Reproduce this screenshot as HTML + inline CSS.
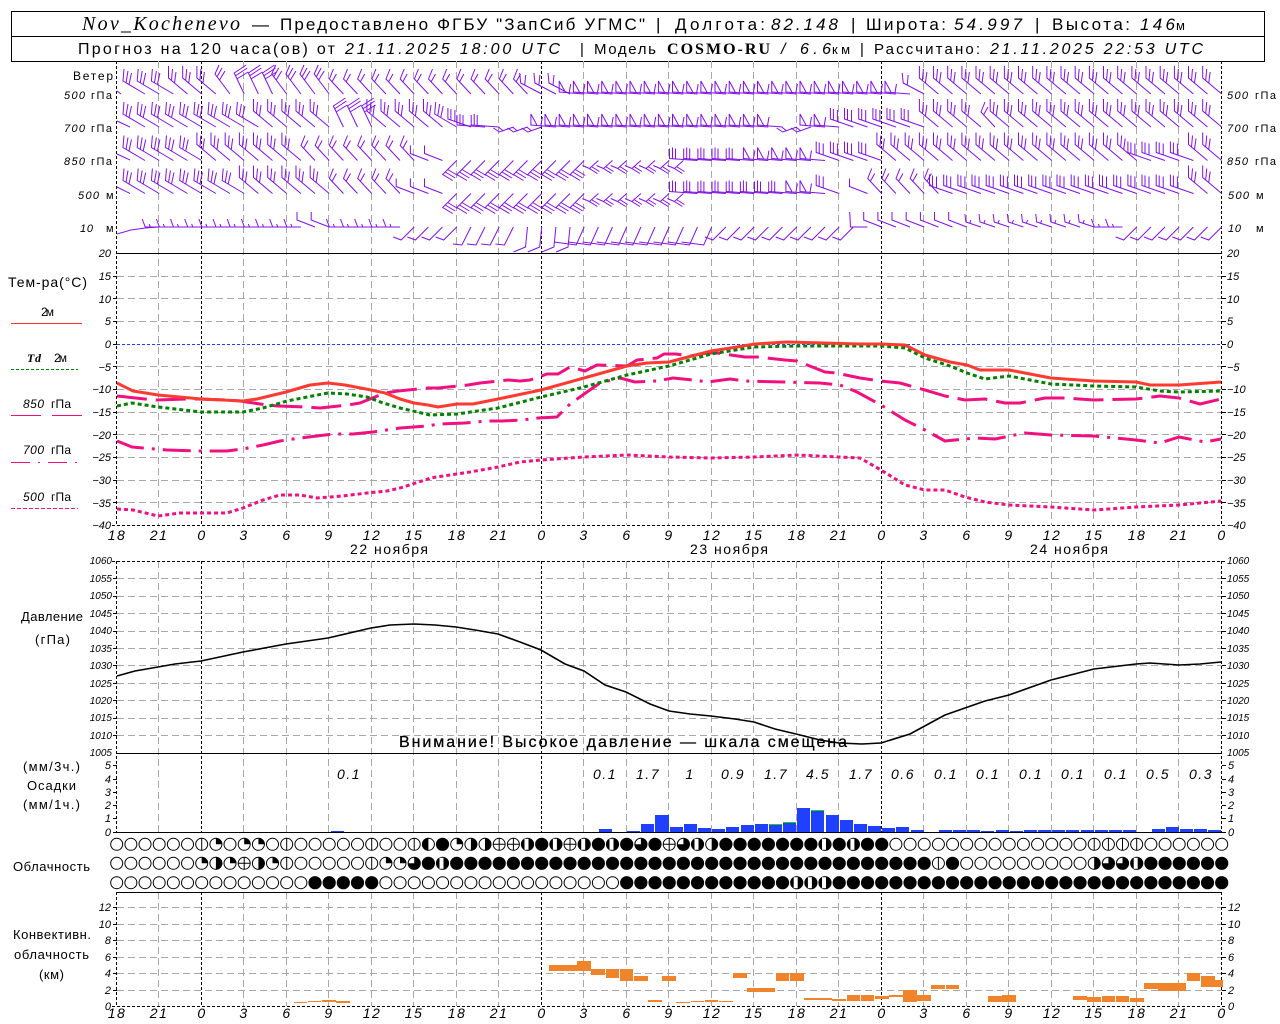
<!DOCTYPE html>
<html><head><meta charset="utf-8"><title>Nov_Kochenevo</title>
<style>
html,body{margin:0;padding:0;background:#fff}
svg{display:block}
text{font-family:"Liberation Sans",sans-serif;fill:#000}
.i{font-style:italic}
.n{font-style:italic;font-size:11px}
.s{font-family:"Liberation Serif",serif;font-style:italic}
.t{font-style:italic;font-size:14px;text-anchor:middle;letter-spacing:1.5px}
.e{text-anchor:end}
</style></head><body>
<svg width="1280" height="1024" viewBox="0 0 1280 1024" xmlns="http://www.w3.org/2000/svg">
<defs>
<g id="e"><circle r="6" fill="#fff" stroke="#000" stroke-width="1"/></g>
<g id="f"><circle r="6.6" fill="#000"/></g>
<g id="v"><circle r="6" fill="#fff" stroke="#000"/><path d="M0-6V6" stroke="#000"/></g>
<g id="q"><circle r="6" fill="#fff" stroke="#000"/><path d="M0 0V-6.4A6.4 6.4 0 0 1 6.4 0Z" fill="#000"/></g>
<g id="R"><circle r="6" fill="#fff" stroke="#000"/><path d="M0-6.4A6.4 6.4 0 0 1 0 6.4Z" fill="#000"/></g>
<g id="L"><circle r="6" fill="#fff" stroke="#000"/><path d="M0-6.4A6.4 6.4 0 0 0 0 6.4Z" fill="#000"/></g>
<g id="B"><circle r="6.6" fill="#000"/><rect x="-3" y="-5.5" width="4" height="11" fill="#fff"/></g>
<g id="C"><circle r="6" fill="#fff" stroke="#000"/><path d="M-6 0H6M0-6V6" stroke="#000"/></g>
<g id="T"><circle r="6.6" fill="#000"/><path d="M0 0V-5.5A5.5 5.5 0 0 0-5.5 0Z" fill="#fff"/></g>
<g id="e3"><use href="#e"/><use href="#e" x="14.17"/><use href="#e" x="28.33"/></g>
<g id="e6"><use href="#e3"/><use href="#e3" x="42.5"/></g>
<g id="f3"><use href="#f"/><use href="#f" x="14.17"/><use href="#f" x="28.33"/></g>
<g id="f6"><use href="#f3"/><use href="#f3" x="42.5"/></g>
<g id="f12"><use href="#f6"/><use href="#f6" x="85"/></g>
<path id="A" d="M0 0L-22-13L-21-25M-19-11L-17-23M-16-9.5L-13.5-21"/>
<path id="Ba" d="M0 0L-19-16L-19-28M-16-13.5L-15-25M-13-11L-11.5-22"/>
<path id="Cc" d="M0 0L-10-21L2-29M-9-18L3-26M-7.5-15L4-22"/>
<path id="D" d="M0 0L-15-20L-11-29M-13-17L-8-26M-10.5-14L-5-23"/>
<path id="E" d="M0 0L-14-15L-10-25M-11.5-12L-7-20"/>
<path id="F" d="M0 0L-21-11L-22-21M-17-9L-16-19"/>
<path id="H" d="M0 0L-25-2L-25-13L-19-2M-15-1.5L-13.5-10"/>
<path id="U" d="M0 0L-28-2L-28-12M-25-2L-25-13M-22-2L-22-12"/>
<path id="P" d="M0 0L-23-8L-23-19M-20-7L-20-18M-16-6L-16-17"/>
<path id="Z" d="M0 0L-14 14L-4 20M-11.5 11.5L-1.5 17.5M-9 9L1 15"/>
<path id="G" d="M0 0L-9 8L-1 13M-7 6L1 11M-9 8L-16 5"/>
<path id="W" d="M0 0L-14 5L-20 1M-10 4L-15 0"/>
<path id="S" d="M0 0L-9 18L-18 17"/>
<path id="S2" d="M0 0L-8 18L-30 15"/>
<path id="S3" d="M0 0L-2 20L-14 25"/>
<path id="V" d="M0 0L-13 13L-21 10"/>
<path id="M" d="M0 0L-14 0L-17-8M-9 0L-10-3"/>
<path id="N" d="M0 0L-18-7L-18-15"/>
<path id="Q" d="M0 0L-15-5L-16-13M-11-4L-10-7"/>
</defs>
<rect width="1280" height="1024" fill="#fff"/>

<!-- header -->
<rect x="11.5" y="11.5" width="1253" height="50" fill="none" stroke="#000"/>
<path d="M11 36.5H1265" stroke="#000"/>
<text class="s" x="82" y="30" font-size="20" textLength="158">Nov_Kochenevo</text>
<text x="252" y="30" font-size="17">—</text>
<text x="280" y="30" font-size="17" textLength="365">Предоставлено ФГБУ "ЗапСиб УГМС"</text>
<text x="656" y="30" font-size="17">|</text>
<text x="675" y="30" font-size="17" textLength="90">Долгота:</text>
<text class="i" x="771" y="30" font-size="17" textLength="67">82.148</text>
<text x="851" y="30" font-size="17">|</text>
<text x="866" y="30" font-size="17" textLength="80">Широта:</text>
<text class="i" x="954" y="30" font-size="17" textLength="68">54.997</text>
<text x="1035" y="30" font-size="17">|</text>
<text x="1052" y="30" font-size="17" textLength="78">Высота:</text>
<text class="i" x="1140" y="30" font-size="17" textLength="35">146</text>
<text x="1176" y="30" font-size="13" textLength="11">м</text>

<text x="78" y="54" font-size="16" textLength="257">Прогноз на 120 часа(ов) от</text>
<text class="i" x="345" y="54" font-size="16" textLength="215">21.11.2025 18:00 UTC</text>
<text x="580" y="54" font-size="15">|</text>
<text x="594" y="54" font-size="15" textLength="62">Модель</text>
<text x="667" y="54" font-size="16" font-weight="bold" style="font-family:'Liberation Serif',serif" textLength="103">COSMO-RU</text>
<text class="i" x="781" y="54" font-size="16">/</text>
<text class="i" x="800" y="54" font-size="16" textLength="31">6.6</text>
<text x="832" y="54" font-size="13" textLength="18">км</text>
<text x="860" y="54" font-size="15">|</text>
<text x="874" y="54" font-size="15" textLength="106">Рассчитано:</text>
<text class="i" x="990" y="54" font-size="16" textLength="213">21.11.2025 22:53 UTC</text>

<!-- grid: gray vertical -->
<path d="M158.5 61V525M243.5 61V525M286.5 61V525M328.5 61V525M371.5 61V525M413.5 61V525M456.5 61V525M498.5 61V525M583.5 61V525M626.5 61V525M668.5 61V525M711.5 61V525M753.5 61V525M796.5 61V525M838.5 61V525M923.5 61V525M966.5 61V525M1008.5 61V525M1051.5 61V525M1093.5 61V525M1136.5 61V525M1178.5 61V525
M158.5 561V832M243.5 561V832M286.5 561V832M328.5 561V832M371.5 561V832M413.5 561V832M456.5 561V832M498.5 561V832M583.5 561V832M626.5 561V832M668.5 561V832M711.5 561V832M753.5 561V832M796.5 561V832M838.5 561V832M923.5 561V832M966.5 561V832M1008.5 561V832M1051.5 561V832M1093.5 561V832M1136.5 561V832M1178.5 561V832
M158.5 892V1006M243.5 892V1006M286.5 892V1006M328.5 892V1006M371.5 892V1006M413.5 892V1006M456.5 892V1006M498.5 892V1006M583.5 892V1006M626.5 892V1006M668.5 892V1006M711.5 892V1006M753.5 892V1006M796.5 892V1006M838.5 892V1006M923.5 892V1006M966.5 892V1006M1008.5 892V1006M1051.5 892V1006M1093.5 892V1006M1136.5 892V1006M1178.5 892V1006" stroke="#a8a8a8" stroke-dasharray="7 4" fill="none"/>
<!-- gray horizontal -->
<path d="M117 276.5H1222M117 298.5H1222M117 321.5H1222M117 366.5H1222M117 389.5H1222M117 412.5H1222M117 434.5H1222M117 457.5H1222M117 480.5H1222M117 502.5H1222
M117 578.5H1222M117 596.5H1222M117 613.5H1222M117 631.5H1222M117 648.5H1222M117 665.5H1222M117 683.5H1222M117 700.5H1222M117 718.5H1222M117 735.5H1222
M117 907.5H1222M117 924.5H1222M117 940.5H1222M117 957.5H1222M117 973.5H1222M117 990.5H1222" stroke="#a8a8a8" stroke-dasharray="7 4" fill="none"/>
<path d="M117 344.5H1222" stroke="#2040ff" stroke-dasharray="3 2" fill="none"/>
<!-- black vertical dashed -->
<path d="M116.5 61V525M201.5 61V525M541.5 61V525M881.5 61V525M1221.5 61V525M116.5 561V832M201.5 561V832M541.5 561V832M881.5 561V832M1221.5 561V832M116.5 892V1006M201.5 892V1006M541.5 892V1006M881.5 892V1006M1221.5 892V1006" stroke="#000" stroke-dasharray="3 2" fill="none"/>
<!-- solid and dashed black horizontals -->
<path d="M117 253.5H1222M117 753.5H1222M117 832.5H1222M117 892.5H1222" stroke="#000" fill="none"/>
<path d="M112 525.5H1226M112 561.5H1226M112 1006.5H1226" stroke="#000" stroke-dasharray="3 2" fill="none"/>
<path d="M113 276.5h4M113 298.5h4M113 321.5h4M113 344.5h4M113 366.5h4M113 389.5h4M113 412.5h4M113 434.5h4M113 457.5h4M113 480.5h4M113 502.5h4M113 578.5h4M113 596.5h4M113 613.5h4M113 631.5h4M113 648.5h4M113 665.5h4M113 683.5h4M113 700.5h4M113 718.5h4M113 735.5h4M113 765.5h4M113 779.5h4M113 792.5h4M113 805.5h4M113 818.5h4M113 832.5h4M113 907.5h4M113 924.5h4M113 940.5h4M113 957.5h4M113 973.5h4M113 990.5h4
M1222 276.5h4M1222 298.5h4M1222 321.5h4M1222 344.5h4M1222 366.5h4M1222 389.5h4M1222 412.5h4M1222 434.5h4M1222 457.5h4M1222 480.5h4M1222 502.5h4M1222 578.5h4M1222 596.5h4M1222 613.5h4M1222 631.5h4M1222 648.5h4M1222 665.5h4M1222 683.5h4M1222 700.5h4M1222 718.5h4M1222 735.5h4M1222 765.5h4M1222 779.5h4M1222 792.5h4M1222 805.5h4M1222 818.5h4M1222 832.5h4M1222 907.5h4M1222 924.5h4M1222 940.5h4M1222 957.5h4M1222 973.5h4M1222 990.5h4" stroke="#000" fill="none"/>

<!-- wind barbs -->
<g fill="none" stroke="#8012e6" stroke-width="1">
<path d="M117 91L121 94M117 121L130 127M117 154L130 160M117 187L130 193.5M117 234L131 230L145 228L159 227"/>
<g transform="translate(116.7,94)">
<use href="#A" x="28.3"/><use href="#A" x="42.5"/><use href="#A" x="56.7"/><use href="#Ba" x="70.8"/><use href="#Ba" x="85"/><use href="#Ba" x="99.2"/><use href="#D" x="113.3"/><use href="#Cc" x="127.5"/><use href="#Cc" x="141.7"/><use href="#Cc" x="155.8"/><use href="#D" x="170"/><use href="#D" x="184.2"/><use href="#D" x="198.3"/><use href="#D" x="212.5"/><use href="#E" x="226.7"/><use href="#E" x="240.8"/><use href="#E" x="255"/><use href="#E" x="269.2"/><use href="#E" x="283.3"/><use href="#E" x="297.5"/><use href="#E" x="311.7"/><use href="#E" x="325.8"/><use href="#E" x="340"/><use href="#E" x="354.2"/><use href="#E" x="368.3"/><use href="#E" x="382.5"/><use href="#E" x="396.7"/><use href="#E" x="410.8"/><use href="#F" x="425"/><use href="#F" x="439.2"/><use href="#F" x="453.3"/><use href="#H" x="467.5"/><use href="#H" x="481.7"/><use href="#H" x="495.8"/><use href="#H" x="510"/><use href="#H" x="524.2"/><use href="#H" x="538.3"/><use href="#H" x="552.5"/><use href="#H" x="566.7"/><use href="#H" x="580.8"/><use href="#H" x="595"/><use href="#H" x="609.2"/><use href="#H" x="623.3"/><use href="#H" x="637.5"/><use href="#H" x="651.7"/><use href="#H" x="665.8"/><use href="#H" x="680"/><use href="#H" x="694.2"/><use href="#H" x="708.3"/><use href="#H" x="722.5"/><use href="#H" x="736.7"/><use href="#H" x="750.8"/><use href="#H" x="765"/><use href="#H" x="779.2"/><use href="#H" x="793.3"/><use href="#F" x="807.5"/><use href="#Ba" x="821.7"/><use href="#Ba" x="835.8"/><use href="#Ba" x="850"/><use href="#Ba" x="864.2"/><use href="#Ba" x="878.3"/><use href="#Ba" x="892.5"/><use href="#Ba" x="906.7"/><use href="#Ba" x="920.8"/><use href="#Ba" x="935"/><use href="#Ba" x="949.2"/><use href="#Ba" x="963.3"/><use href="#Ba" x="977.5"/><use href="#Ba" x="991.7"/><use href="#Ba" x="1005.8"/><use href="#Ba" x="1020"/><use href="#Ba" x="1034.2"/><use href="#Ba" x="1048.3"/><use href="#Ba" x="1062.5"/><use href="#Ba" x="1076.7"/><use href="#Ba" x="1090.8"/><use href="#Ba" x="1105"/>
</g>
<g transform="translate(116.7,127)">
<use href="#A" x="28.3"/><use href="#A" x="42.5"/><use href="#A" x="56.7"/><use href="#A" x="70.8"/><use href="#A" x="85"/><use href="#A" x="99.2"/><use href="#A" x="113.3"/><use href="#A" x="127.5"/><use href="#A" x="141.7"/><use href="#Ba" x="155.8"/><use href="#Ba" x="170"/><use href="#Ba" x="184.2"/><use href="#Ba" x="198.3"/><use href="#Ba" x="212.5"/><use href="#Cc" x="226.7"/><use href="#Cc" x="240.8"/><use href="#Cc" x="255"/><use href="#Ba" x="269.2"/><use href="#Ba" x="283.3"/><use href="#Ba" x="297.5"/><use href="#Ba" x="311.7"/><use href="#Ba" x="325.8"/><use href="#A" x="340"/><use href="#P" x="354.2"/><use href="#U" x="368.3"/><use href="#U" x="382.5"/><use href="#W" x="396.7"/><use href="#W" x="410.8"/><use href="#W" x="425"/><use href="#H" x="439.2"/><use href="#H" x="453.3"/><use href="#H" x="467.5"/><use href="#H" x="481.7"/><use href="#H" x="495.8"/><use href="#H" x="510"/><use href="#H" x="524.2"/><use href="#H" x="538.3"/><use href="#H" x="552.5"/><use href="#H" x="566.7"/><use href="#H" x="580.8"/><use href="#H" x="595"/><use href="#H" x="609.2"/><use href="#H" x="623.3"/><use href="#H" x="637.5"/><use href="#H" x="651.7"/><use href="#H" x="665.8"/><use href="#W" x="680"/><use href="#W" x="694.2"/><use href="#H" x="708.3"/><use href="#H" x="722.5"/><use href="#P" x="736.7"/><use href="#P" x="750.8"/><use href="#P" x="765"/><use href="#P" x="779.2"/><use href="#P" x="793.3"/><use href="#P" x="807.5"/><use href="#Ba" x="821.7"/><use href="#Ba" x="835.8"/><use href="#Ba" x="850"/><use href="#Ba" x="864.2"/><use href="#E" x="878.3"/><use href="#Ba" x="892.5"/><use href="#Ba" x="906.7"/><use href="#Ba" x="920.8"/><use href="#Ba" x="935"/><use href="#Ba" x="949.2"/><use href="#Ba" x="963.3"/><use href="#Ba" x="977.5"/><use href="#Ba" x="991.7"/><use href="#Ba" x="1005.8"/><use href="#Ba" x="1020"/><use href="#Ba" x="1034.2"/><use href="#Ba" x="1048.3"/><use href="#Ba" x="1062.5"/><use href="#Ba" x="1076.7"/><use href="#Ba" x="1090.8"/><use href="#Ba" x="1105"/>
</g>
<g transform="translate(116.7,160.5)">
<use href="#A" x="28.3"/><use href="#A" x="42.5"/><use href="#A" x="56.7"/><use href="#A" x="70.8"/><use href="#A" x="85"/><use href="#Ba" x="99.2"/><use href="#Ba" x="113.3"/><use href="#Ba" x="127.5"/><use href="#Ba" x="141.7"/><use href="#Ba" x="155.8"/><use href="#Ba" x="170"/><use href="#Ba" x="184.2"/><use href="#E" x="198.3"/><use href="#E" x="212.5"/><use href="#E" x="226.7"/><use href="#E" x="240.8"/><use href="#E" x="255"/><use href="#E" x="269.2"/><use href="#E" x="283.3"/><use href="#E" x="297.5"/><use href="#N" x="311.7"/><use href="#N" x="325.8"/><use href="#Z" x="340"/><use href="#Z" x="354.2"/><use href="#Z" x="368.3"/><use href="#Z" x="382.5"/><use href="#Z" x="396.7"/><use href="#Z" x="410.8"/><use href="#Z" x="425"/><use href="#Z" x="439.2"/><use href="#Z" x="453.3"/><use href="#Z" x="467.5"/><use href="#G" x="481.7"/><use href="#G" x="495.8"/><use href="#G" x="510"/><use href="#G" x="524.2"/><use href="#G" x="538.3"/><use href="#G" x="552.5"/><use href="#G" x="566.7"/><use href="#U" x="580.8"/><use href="#U" x="595"/><use href="#U" x="609.2"/><use href="#U" x="623.3"/><use href="#U" x="637.5"/><use href="#H" x="651.7"/><use href="#H" x="665.8"/><use href="#H" x="680"/><use href="#H" x="694.2"/><use href="#H" x="708.3"/><use href="#P" x="722.5"/><use href="#P" x="736.7"/><use href="#P" x="750.8"/><use href="#P" x="765"/><use href="#Ba" x="779.2"/><use href="#Ba" x="793.3"/><use href="#Ba" x="807.5"/><use href="#Ba" x="821.7"/><use href="#Ba" x="835.8"/><use href="#Ba" x="850"/><use href="#Ba" x="864.2"/><use href="#Ba" x="878.3"/><use href="#Ba" x="892.5"/><use href="#Ba" x="906.7"/><use href="#Ba" x="920.8"/><use href="#Ba" x="935"/><use href="#Ba" x="949.2"/><use href="#Ba" x="963.3"/><use href="#Ba" x="977.5"/><use href="#Ba" x="991.7"/><use href="#Ba" x="1005.8"/><use href="#Ba" x="1020"/><use href="#P" x="1034.2"/><use href="#P" x="1048.3"/><use href="#P" x="1062.5"/><use href="#P" x="1076.7"/><use href="#Ba" x="1090.8"/><use href="#Ba" x="1105"/>
</g>
<g transform="translate(116.7,193.5)">
<use href="#A" x="28.3"/><use href="#A" x="42.5"/><use href="#A" x="56.7"/><use href="#A" x="70.8"/><use href="#A" x="85"/><use href="#A" x="99.2"/><use href="#A" x="113.3"/><use href="#A" x="127.5"/><use href="#Ba" x="141.7"/><use href="#Ba" x="155.8"/><use href="#Ba" x="170"/><use href="#Ba" x="184.2"/><use href="#Ba" x="198.3"/><use href="#Ba" x="212.5"/><use href="#E" x="226.7"/><use href="#E" x="240.8"/><use href="#E" x="255"/><use href="#E" x="269.2"/><use href="#E" x="283.3"/><use href="#N" x="297.5"/><use href="#N" x="311.7"/><use href="#N" x="325.8"/><use href="#Z" x="340"/><use href="#Z" x="354.2"/><use href="#Z" x="368.3"/><use href="#Z" x="382.5"/><use href="#Z" x="396.7"/><use href="#Z" x="410.8"/><use href="#Z" x="425"/><use href="#Z" x="439.2"/><use href="#Z" x="453.3"/><use href="#Z" x="467.5"/><use href="#G" x="481.7"/><use href="#G" x="495.8"/><use href="#G" x="510"/><use href="#G" x="524.2"/><use href="#G" x="538.3"/><use href="#G" x="552.5"/><use href="#G" x="566.7"/><use href="#U" x="580.8"/><use href="#U" x="595"/><use href="#U" x="609.2"/><use href="#U" x="623.3"/><use href="#U" x="637.5"/><use href="#U" x="651.7"/><use href="#U" x="665.8"/><use href="#U" x="680"/><use href="#H" x="694.2"/><use href="#H" x="708.3"/><use href="#P" x="722.5"/><use href="#N" x="750.8"/><use href="#E" x="765"/><use href="#E" x="779.2"/><use href="#E" x="793.3"/><use href="#E" x="807.5"/><use href="#E" x="821.7"/><use href="#P" x="835.8"/><use href="#P" x="850"/><use href="#P" x="864.2"/><use href="#P" x="878.3"/><use href="#P" x="892.5"/><use href="#P" x="906.7"/><use href="#P" x="920.8"/><use href="#P" x="935"/><use href="#P" x="949.2"/><use href="#P" x="963.3"/><use href="#P" x="977.5"/><use href="#P" x="991.7"/><use href="#P" x="1005.8"/><use href="#P" x="1020"/><use href="#P" x="1034.2"/><use href="#P" x="1048.3"/><use href="#P" x="1062.5"/><use href="#P" x="1076.7"/><use href="#Ba" x="1090.8"/><use href="#Ba" x="1105"/>
</g>
<g transform="translate(116.7,227)">
<use href="#M" x="42.5"/><use href="#M" x="56.7"/><use href="#M" x="70.8"/><use href="#M" x="85"/><use href="#M" x="99.2"/><use href="#M" x="113.3"/><use href="#M" x="127.5"/><use href="#M" x="141.7"/><use href="#M" x="155.8"/><use href="#M" x="170"/><use href="#M" x="184.2"/><use href="#N" x="198.3"/><use href="#N" x="212.5"/><use href="#M" x="226.7"/><use href="#M" x="240.8"/><use href="#M" x="255"/><use href="#M" x="269.2"/><use href="#M" x="283.3"/><use href="#V" x="297.5"/><use href="#V" x="311.7"/><use href="#V" x="325.8"/><use href="#V" x="340"/><use href="#S" x="354.2"/><use href="#S" x="368.3"/><use href="#S" x="382.5"/><use href="#S" x="396.7"/><use href="#S3" x="410.8"/><use href="#S3" x="425"/><use href="#S3" x="439.2"/><use href="#S3" x="453.3"/><use href="#S2" x="467.5"/><use href="#S2" x="481.7"/><use href="#S2" x="495.8"/><use href="#S2" x="510"/><use href="#S2" x="524.2"/><use href="#S2" x="538.3"/><use href="#S2" x="552.5"/><use href="#S2" x="566.7"/><use href="#S2" x="580.8"/><use href="#S2" x="595"/><use href="#V" x="609.2"/><use href="#V" x="623.3"/><use href="#V" x="637.5"/><use href="#V" x="651.7"/><use href="#V" x="665.8"/><use href="#V" x="680"/><use href="#V" x="694.2"/><use href="#V" x="708.3"/><use href="#V" x="722.5"/><use href="#V" x="736.7"/><path d="M750.8 0H733.8L733 -15"/><use href="#N" x="765"/><use href="#N" x="779.2"/><use href="#N" x="793.3"/><use href="#N" x="807.5"/><use href="#N" x="821.7"/><use href="#N" x="835.8"/><use href="#N" x="850"/><use href="#Q" x="864.2"/><use href="#Q" x="878.3"/><use href="#Q" x="892.5"/><use href="#Q" x="906.7"/><use href="#Q" x="920.8"/><use href="#Q" x="935"/><use href="#Q" x="949.2"/><use href="#Q" x="963.3"/><use href="#Q" x="977.5"/><use href="#M" x="991.7"/><use href="#M" x="1005.8"/><use href="#V" x="1020"/><use href="#V" x="1034.2"/><use href="#V" x="1048.3"/><use href="#V" x="1062.5"/><use href="#V" x="1076.7"/><use href="#V" x="1090.8"/><use href="#V" x="1105"/>
</g>
</g>

<!-- wind labels -->
<text x="73" y="80" font-size="12" textLength="40">Ветер</text>
<g font-size="11">
<text class="i" x="64" y="99" textLength="21">500</text><text x="91" y="99" textLength="21">гПа</text>
<text class="i" x="64" y="132" textLength="21">700</text><text x="91" y="132" textLength="21">гПа</text>
<text class="i" x="64" y="165" textLength="21">850</text><text x="91" y="165" textLength="21">гПа</text>
<text class="i" x="78" y="199" textLength="21">500</text><text x="106" y="199" textLength="7">м</text>
<text class="i" x="80" y="232" textLength="13">10</text><text x="106" y="232" textLength="7">м</text>
<text class="i" x="1227" y="99" textLength="21">500</text><text x="1255" y="99" textLength="21">гПа</text>
<text class="i" x="1227" y="132" textLength="21">700</text><text x="1255" y="132" textLength="21">гПа</text>
<text class="i" x="1227" y="165" textLength="21">850</text><text x="1255" y="165" textLength="21">гПа</text>
<text class="i" x="1228" y="199" textLength="21">500</text><text x="1256" y="199" textLength="7">м</text>
<text class="i" x="1228" y="232" textLength="13">10</text><text x="1256" y="232" textLength="7">м</text>
</g>

<!-- temperature axis labels -->
<text class="n e" x="111" y="257">20</text><text class="n e" x="111" y="280">15</text><text class="n e" x="111" y="303">10</text><text class="n e" x="111" y="325">5</text><text class="n e" x="111" y="348">0</text><text class="n e" x="111" y="371">−5</text><text class="n e" x="111" y="393">−10</text><text class="n e" x="111" y="416">−15</text><text class="n e" x="111" y="439">−20</text><text class="n e" x="111" y="461">−25</text><text class="n e" x="111" y="484">−30</text><text class="n e" x="111" y="507">−35</text><text class="n e" x="111" y="529">−40</text>
<text class="n" x="1227" y="257">20</text><text class="n" x="1227" y="280">15</text><text class="n" x="1227" y="303">10</text><text class="n" x="1227" y="325">5</text><text class="n" x="1227" y="348">0</text><text class="n" x="1227" y="371">−5</text><text class="n" x="1227" y="393">−10</text><text class="n" x="1227" y="416">−15</text><text class="n" x="1227" y="439">−20</text><text class="n" x="1227" y="461">−25</text><text class="n" x="1227" y="484">−30</text><text class="n" x="1227" y="507">−35</text><text class="n" x="1227" y="529">−40</text>

<!-- temperature legend -->
<text x="8" y="287" font-size="14" textLength="79">Тем-ра(°C)</text>
<text x="41" y="316" font-size="12" textLength="13">2м</text>
<path d="M11 323.5H82" stroke="#ff3030"/>
<text class="s" x="27" y="362" font-size="12" font-weight="bold" textLength="14">Td</text><text x="54" y="362" font-size="12" textLength="13">2м</text>
<path d="M11 369.5H78" stroke="#008000" stroke-dasharray="3 2"/>
<text class="i" x="23" y="408" font-size="12" textLength="21">850</text><text x="51" y="408" font-size="12" textLength="20">гПа</text>
<path d="M11 415.5H41M52 415.5H82" stroke="#f0107f"/>
<text class="i" x="23" y="454" font-size="12" textLength="21">700</text><text x="51" y="454" font-size="12" textLength="20">гПа</text>
<path d="M11 462.5H30M38 462.5H40M48 462.5H67M75 462.5H77" stroke="#f0107f"/>
<text class="i" x="23" y="501" font-size="12" textLength="21">500</text><text x="51" y="501" font-size="12" textLength="20">гПа</text>
<path d="M11 508.5H78" stroke="#f0107f" stroke-dasharray="4 2"/>

<!-- temperature curves -->
<g fill="none" stroke-linejoin="round">
<polyline stroke="#f0107f" stroke-width="3" stroke-dasharray="4 3" points="117,509 133,510 158,516 180,513 227,513 243,508 263,500 280,495 300,495 317,498 343,496 367,493 387,491 400,488 428,479 430,478 470,472 498,467 520,462 541,460 584,457 627,455 669,457 711,458 754,457 797,455 839,457 860,458 881,470 905,485 925,490 945,490 965,497 985,502 1009,505 1051,507 1094,510 1136,507 1179,505 1221,501"/>
<polyline stroke="#f0107f" stroke-width="3" stroke-dasharray="28 8 3 8" points="117,441 132,447 143,448 167,450 200,451 227,451 243,449 263,445 280,441 300,438 317,436 333,434 353,434 373,432 400,428 428,426 438,424 465,423 487,421 502,421 522,420 538,418 557,417 570,404 587,392 600,383 620,378 635,382 657,381 673,378 693,380 708,382 730,379 745,381 783,382 820,383 840,385 857,392 881,405 905,420 925,430 945,441 975,438 995,439 1025,433 1051,435 1094,436 1136,440 1160,443 1179,437 1205,442 1221,439"/>
<polyline stroke="#f0107f" stroke-width="3" stroke-dasharray="30 9" points="117,396 145,399 157,400 187,399 197,399 227,400 240,401 267,405 278,406 307,407 320,408 348,405 360,403 385,393 398,391 428,388 438,388 468,385 480,383 508,380 520,381 530,380 547,374 558,374 570,367 585,371 597,365 627,366 637,360 657,358 664,354 676,354 690,356 707,353 717,353 745,357 757,357 785,360 797,361 825,372 836,373 860,378 881,381 900,383 925,390 945,396 965,400 985,399 1005,403 1020,403 1045,398 1065,398 1094,400 1136,399 1160,396 1179,398 1200,404 1221,399"/>
<polyline stroke="#008000" stroke-width="3" stroke-dasharray="4 3" points="117,406 132,403 158,407 201,412 243,412 263,408 287,401 307,397 328,393 347,394 367,397 383,403 400,408 430,415 457,414 498,408 541,397 584,387 627,375 669,366 711,354 754,347 797,346 860,346 881,346 905,348 925,358 950,366 967,373 985,379 1009,376 1030,380 1051,384 1094,386 1136,387 1160,391 1179,392 1221,391"/>
<polyline stroke="#ff3a30" stroke-width="3" points="117,383 133,391 158,395 201,399 243,401 257,399 286,392 310,385 328,383 345,385 371,390 385,393 400,399 414,403 428,405 438,407 457,404 473,404 498,399 541,390 584,378 627,366 647,363 669,362 711,351 737,347 755,344 787,342 860,344 881,344 905,345 925,355 950,362 967,365 980,370 1009,370 1051,378 1094,381 1136,382 1150,385 1179,385 1221,382"/>
</g>

<!-- time labels -->
<text class="t" x="117" y="540">18</text><text class="t" x="159" y="540">21</text><text class="t" x="202" y="540">0</text><text class="t" x="244" y="540">3</text><text class="t" x="287" y="540">6</text><text class="t" x="329" y="540">9</text><text class="t" x="372" y="540">12</text><text class="t" x="414" y="540">15</text><text class="t" x="457" y="540">18</text><text class="t" x="499" y="540">21</text><text class="t" x="542" y="540">0</text><text class="t" x="584" y="540">3</text><text class="t" x="627" y="540">6</text><text class="t" x="669" y="540">9</text><text class="t" x="712" y="540">12</text><text class="t" x="754" y="540">15</text><text class="t" x="797" y="540">18</text><text class="t" x="839" y="540">21</text><text class="t" x="882" y="540">0</text><text class="t" x="924" y="540">3</text><text class="t" x="967" y="540">6</text><text class="t" x="1009" y="540">9</text><text class="t" x="1052" y="540">12</text><text class="t" x="1094" y="540">15</text><text class="t" x="1137" y="540">18</text><text class="t" x="1179" y="540">21</text><text class="t" x="1222" y="540">0</text>
<text x="350" y="554" font-size="14" textLength="78">22 ноября</text>
<text x="690" y="554" font-size="14" textLength="78">23 ноября</text>
<text x="1030" y="554" font-size="14" textLength="78">24 ноября</text>

<!-- pressure -->
<g font-size="10">
<text class="i e" x="112" y="564">1060</text><text class="i e" x="112" y="582">1055</text><text class="i e" x="112" y="599">1050</text><text class="i e" x="112" y="617">1045</text><text class="i e" x="112" y="634">1040</text><text class="i e" x="112" y="652">1035</text><text class="i e" x="112" y="669">1030</text><text class="i e" x="112" y="687">1025</text><text class="i e" x="112" y="704">1020</text><text class="i e" x="112" y="721">1015</text><text class="i e" x="112" y="739">1010</text><text class="i e" x="112" y="756">1005</text>
<text class="i" x="1227" y="564">1060</text><text class="i" x="1227" y="582">1055</text><text class="i" x="1227" y="599">1050</text><text class="i" x="1227" y="617">1045</text><text class="i" x="1227" y="634">1040</text><text class="i" x="1227" y="652">1035</text><text class="i" x="1227" y="669">1030</text><text class="i" x="1227" y="687">1025</text><text class="i" x="1227" y="704">1020</text><text class="i" x="1227" y="721">1015</text><text class="i" x="1227" y="739">1010</text><text class="i" x="1227" y="756">1005</text>
</g>
<text x="21" y="621" font-size="13" textLength="62">Давление</text>
<text x="35" y="644" font-size="13" textLength="35">(гПа)</text>
<polyline fill="none" stroke="#000" stroke-width="1.6" points="117,676 135,671 158,667 175,664 201,661 243,652 286,644 328,638 371,628 390,625 414,624 435,625 456,627 475,630 498,634 520,642 541,650 565,664 584,671 605,685 626,692 650,704 669,711 690,714 711,716 735,719 754,722 775,729 796,734 820,740 839,743 862,744 881,743 910,734 945,715 985,701 1009,695 1051,680 1094,669 1136,664 1150,663 1179,665 1200,664 1221,662"/>
<text x="399" y="747" font-size="16" textLength="448" stroke="#000" stroke-width="0.25">Внимание! Высокое давление — шкала смещена</text>

<!-- precipitation -->
<text x="23" y="771" font-size="13" textLength="57">(мм/3ч.)</text>
<text x="27" y="790" font-size="13" textLength="49">Осадки</text>
<text x="23" y="809" font-size="13" textLength="57">(мм/1ч.)</text>
<g font-size="11">
<text class="i e" x="111" y="769">5</text><text class="i e" x="111" y="783">4</text><text class="i e" x="111" y="796">3</text><text class="i e" x="111" y="809">2</text><text class="i e" x="111" y="822">1</text><text class="i e" x="111" y="836">0</text>
<text class="i" x="1228" y="769">5</text><text class="i" x="1228" y="783">4</text><text class="i" x="1228" y="796">3</text><text class="i" x="1228" y="809">2</text><text class="i" x="1228" y="822">1</text><text class="i" x="1228" y="836">0</text>
</g>
<path fill="#2040ff" d="M331 831h13v1h-13zM599 829h13v3h-13zM627 831h13v1h-13zM641 824h13v8h-13zM655 815h14v17h-14zM670 827h13v5h-13zM684 824h13v8h-13zM698 828h13v4h-13zM712 829h13v3h-13zM726 827h13v5h-13zM741 825h13v7h-13zM755 824h13v8h-13zM769 825h13v7h-13zM783 823h13v9h-13zM797 808h13v24h-13zM811 811h13v21h-13zM826 815h13v17h-13zM840 820h13v12h-13zM854 824h13v8h-13zM868 826h13v6h-13zM882 828h13v4h-13zM896 827h13v5h-13zM911 830h13v2h-13zM939 830h13v2h-13zM953 830h13v2h-13zM967 830h13v2h-13zM981 831h13v1h-13zM996 830h13v2h-13zM1010 831h13v1h-13zM1024 830h13v2h-13zM1038 830h13v2h-13zM1052 830h13v2h-13zM1066 830h13v2h-13zM1081 830h13v2h-13zM1095 830h13v2h-13zM1109 830h13v2h-13zM1123 830h13v2h-13zM1152 829h13v3h-13zM1166 827h13v5h-13zM1180 829h13v3h-13zM1194 829h13v3h-13zM1208 830h13v2h-13z"/>
<path fill="#18d018" d="M769 824h13v1h-13zM783 822h13v1h-13zM811 810h13v1h-13z"/>
<text class="t" x="349" y="779">0.1</text><text class="t" x="605" y="779">0.1</text><text class="t" x="648" y="779">1.7</text><text class="t" x="690" y="779">1</text><text class="t" x="733" y="779">0.9</text><text class="t" x="776" y="779">1.7</text><text class="t" x="818" y="779">4.5</text><text class="t" x="861" y="779">1.7</text><text class="t" x="903" y="779">0.6</text><text class="t" x="946" y="779">0.1</text><text class="t" x="988" y="779">0.1</text><text class="t" x="1031" y="779">0.1</text><text class="t" x="1073" y="779">0.1</text><text class="t" x="1116" y="779">0.1</text><text class="t" x="1158" y="779">0.5</text><text class="t" x="1201" y="779">0.3</text>

<!-- clouds -->
<text x="13" y="871" font-size="13" textLength="77">Облачность</text>
<g transform="translate(116.7,844.3)">
<use href="#e6"/><use href="#v" x="85"/><use href="#q" x="99.2"/><use href="#e" x="113.3"/><use href="#q" x="127.5"/><use href="#q" x="141.7"/><use href="#e" x="155.8"/><use href="#v" x="170"/><use href="#e3" x="184.2"/><use href="#e" x="226.7"/><use href="#e" x="240.8"/><use href="#v" x="255"/><use href="#e" x="269.2"/><use href="#e" x="283.3"/><use href="#v" x="297.5"/><use href="#L" x="311.7"/><use href="#f" x="325.8"/><use href="#q" x="340"/><use href="#R" x="354.2"/><use href="#R" x="368.3"/><use href="#C" x="382.5"/><use href="#C" x="396.7"/><use href="#B" x="410.8"/><use href="#f" x="425"/><use href="#B" x="439.2"/><use href="#C" x="453.3"/><use href="#B" x="467.5"/><use href="#f" x="481.7"/><use href="#B" x="495.8"/><use href="#f" x="510"/><use href="#T" x="524.2"/><use href="#f" x="538.3"/><use href="#C" x="552.5"/><use href="#T" x="566.7"/><use href="#B" x="580.8"/><use href="#R" x="595"/><use href="#f6" x="609.2"/><use href="#f" x="694.2"/><use href="#B" x="708.3"/><use href="#f" x="722.5"/><use href="#B" x="736.7"/><use href="#f" x="750.8"/><use href="#f" x="765"/><use href="#e6" x="779.2"/><use href="#e6" x="864.2"/><use href="#e" x="949.2"/><use href="#e" x="963.3"/><use href="#v" x="977.5"/><use href="#v" x="991.7"/><use href="#v" x="1005.8"/><use href="#v" x="1020"/><use href="#e6" x="1034.2"/>
</g>
<g transform="translate(116.7,863.3)">
<use href="#e6"/><use href="#q" x="85"/><use href="#R" x="99.2"/><use href="#q" x="113.3"/><use href="#C" x="127.5"/><use href="#R" x="141.7"/><use href="#q" x="155.8"/><use href="#v" x="170"/><use href="#e3" x="184.2"/><use href="#e" x="226.7"/><use href="#e" x="240.8"/><use href="#v" x="255"/><use href="#q" x="269.2"/><use href="#q" x="283.3"/><use href="#T" x="297.5"/><use href="#f" x="311.7"/><use href="#B" x="325.8"/><use href="#f12" x="340"/><use href="#f12" x="510"/><use href="#f6" x="680"/><use href="#f3" x="765"/><use href="#f" x="807.5"/><use href="#v" x="821.7"/><use href="#f" x="835.8"/><use href="#e6" x="850"/><use href="#e3" x="935"/><use href="#R" x="977.5"/><use href="#T" x="991.7"/><use href="#T" x="1005.8"/><use href="#B" x="1020"/><use href="#f6" x="1034.2"/>
</g>
<g transform="translate(116.7,882.7)">
<use href="#e6"/><use href="#e6" x="85"/><use href="#e" x="170"/><use href="#e" x="184.2"/><use href="#f3" x="198.3"/><use href="#f" x="240.8"/><use href="#f" x="255"/><use href="#e6" x="269.2"/><use href="#e6" x="354.2"/><use href="#e3" x="439.2"/><use href="#e" x="481.7"/><use href="#e" x="495.8"/><use href="#f12" x="510"/><use href="#B" x="680"/><use href="#B" x="694.2"/><use href="#B" x="708.3"/><use href="#f12" x="722.5"/><use href="#f12" x="892.5"/><use href="#f3" x="1062.5"/><use href="#f" x="1105"/>
</g>

<!-- convective -->
<text x="13" y="939" font-size="13" textLength="78">Конвективн.</text>
<text x="14" y="959" font-size="13" textLength="75">облачность</text>
<text x="39" y="979" font-size="13" textLength="25">(км)</text>
<g font-size="11">
<text class="i e" x="111" y="911">12</text><text class="i e" x="111" y="928">10</text><text class="i e" x="111" y="944">8</text><text class="i e" x="111" y="961">6</text><text class="i e" x="111" y="977">4</text><text class="i e" x="111" y="994">2</text><text class="i e" x="111" y="1010">0</text>
<text class="i" x="1228" y="911">12</text><text class="i" x="1228" y="928">10</text><text class="i" x="1228" y="944">8</text><text class="i" x="1228" y="961">6</text><text class="i" x="1228" y="977">4</text><text class="i" x="1228" y="994">2</text><text class="i" x="1228" y="1010">0</text>
</g>
<path fill="#f0842a" d="M294 1002h13v1h-13zM308 1001h13v1h-13zM322 1000h14v2h-14zM336 1001h14v2h-14zM549 965h28v6h-28zM577 961h14v10h-14zM591 969h14v6h-14zM606 969h13v9h-13zM620 969h13v12h-13zM634 976h14v5h-14zM648 1000h14v2h-14zM662 976h14v5h-14zM676 1002h14v1h-14zM691 1001h13v1h-13zM705 1000h13v2h-13zM719 1001h14v1h-14zM733 973h14v5h-14zM747 988h28v4h-28zM776 973h13v8h-13zM790 973h14v8h-14zM804 998h28v2h-28zM832 999h14v2h-14zM847 995h13v6h-13zM861 995h13v6h-13zM875 996h14v3h-14zM889 995h14v2h-14zM903 990h14v12h-14zM917 995h14v6h-14zM931 985h14v4h-14zM946 985h13v4h-13zM988 996h14v6h-14zM1002 995h14v7h-14zM1073 996h14v4h-14zM1087 997h14v5h-14zM1102 996h13v6h-13zM1116 996h13v6h-13zM1130 998h14v4h-14zM1144 983h14v6h-14zM1158 983h28v8h-28zM1187 973h13v8h-13zM1201 976h14v11h-14zM1215 980h8v7h-8z"/>
<text class="t" x="117" y="1018">18</text><text class="t" x="159" y="1018">21</text><text class="t" x="202" y="1018">0</text><text class="t" x="244" y="1018">3</text><text class="t" x="287" y="1018">6</text><text class="t" x="329" y="1018">9</text><text class="t" x="372" y="1018">12</text><text class="t" x="414" y="1018">15</text><text class="t" x="457" y="1018">18</text><text class="t" x="499" y="1018">21</text><text class="t" x="542" y="1018">0</text><text class="t" x="584" y="1018">3</text><text class="t" x="627" y="1018">6</text><text class="t" x="669" y="1018">9</text><text class="t" x="712" y="1018">12</text><text class="t" x="754" y="1018">15</text><text class="t" x="797" y="1018">18</text><text class="t" x="839" y="1018">21</text><text class="t" x="882" y="1018">0</text><text class="t" x="924" y="1018">3</text><text class="t" x="967" y="1018">6</text><text class="t" x="1009" y="1018">9</text><text class="t" x="1052" y="1018">12</text><text class="t" x="1094" y="1018">15</text><text class="t" x="1137" y="1018">18</text><text class="t" x="1179" y="1018">21</text><text class="t" x="1222" y="1018">0</text>
</svg>
</body></html>
